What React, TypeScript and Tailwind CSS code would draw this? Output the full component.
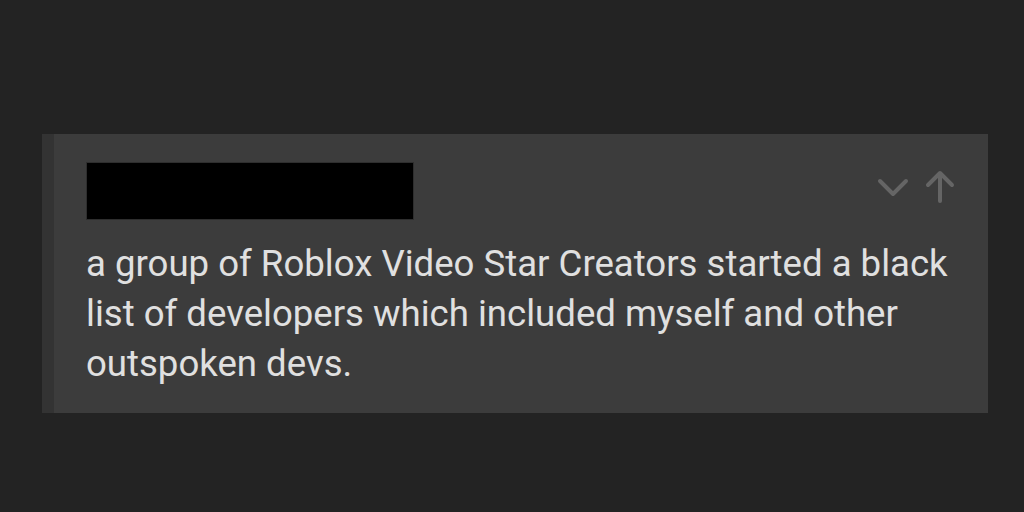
import React from "react";

export default function App() {
  return (
    <div className="h-[512px] w-[1024px] bg-[#232323] pt-[134px] pl-[42px]" style={{ fontFamily: "Roboto, 'Noto Sans', sans-serif" }}>
      <div className="flex w-[946px]">
        <div className="w-[12px] bg-[#333333]" />
        <div className="flex-1 bg-[#3c3c3c] pl-[32px] pr-[32px] pt-[28px] pb-[24px]">
          <div className="flex h-[58px] justify-between">
            <div className="h-[58px] w-[328px] bg-black border border-[#2e2e2e]" />
            <svg width="80" height="36" viewBox="0 0 80 36" className="mt-[7px]" fill="none" stroke="#656565" strokeWidth="4" strokeLinecap="round" strokeLinejoin="round">
              <polyline points="4,12 17,25 30,12" />
              <line x1="64" y1="5" x2="64" y2="32" />
              <polyline points="52,16 64,4 76,16" />
            </svg>
          </div>
          <p className="mt-[19px] text-[36.6px] leading-[50px] text-[#e0e0e0]">
            a group of Roblox Video Star Creators started a black list of developers which included myself and other outspoken devs.
          </p>
        </div>
      </div>
    </div>
  );
}
